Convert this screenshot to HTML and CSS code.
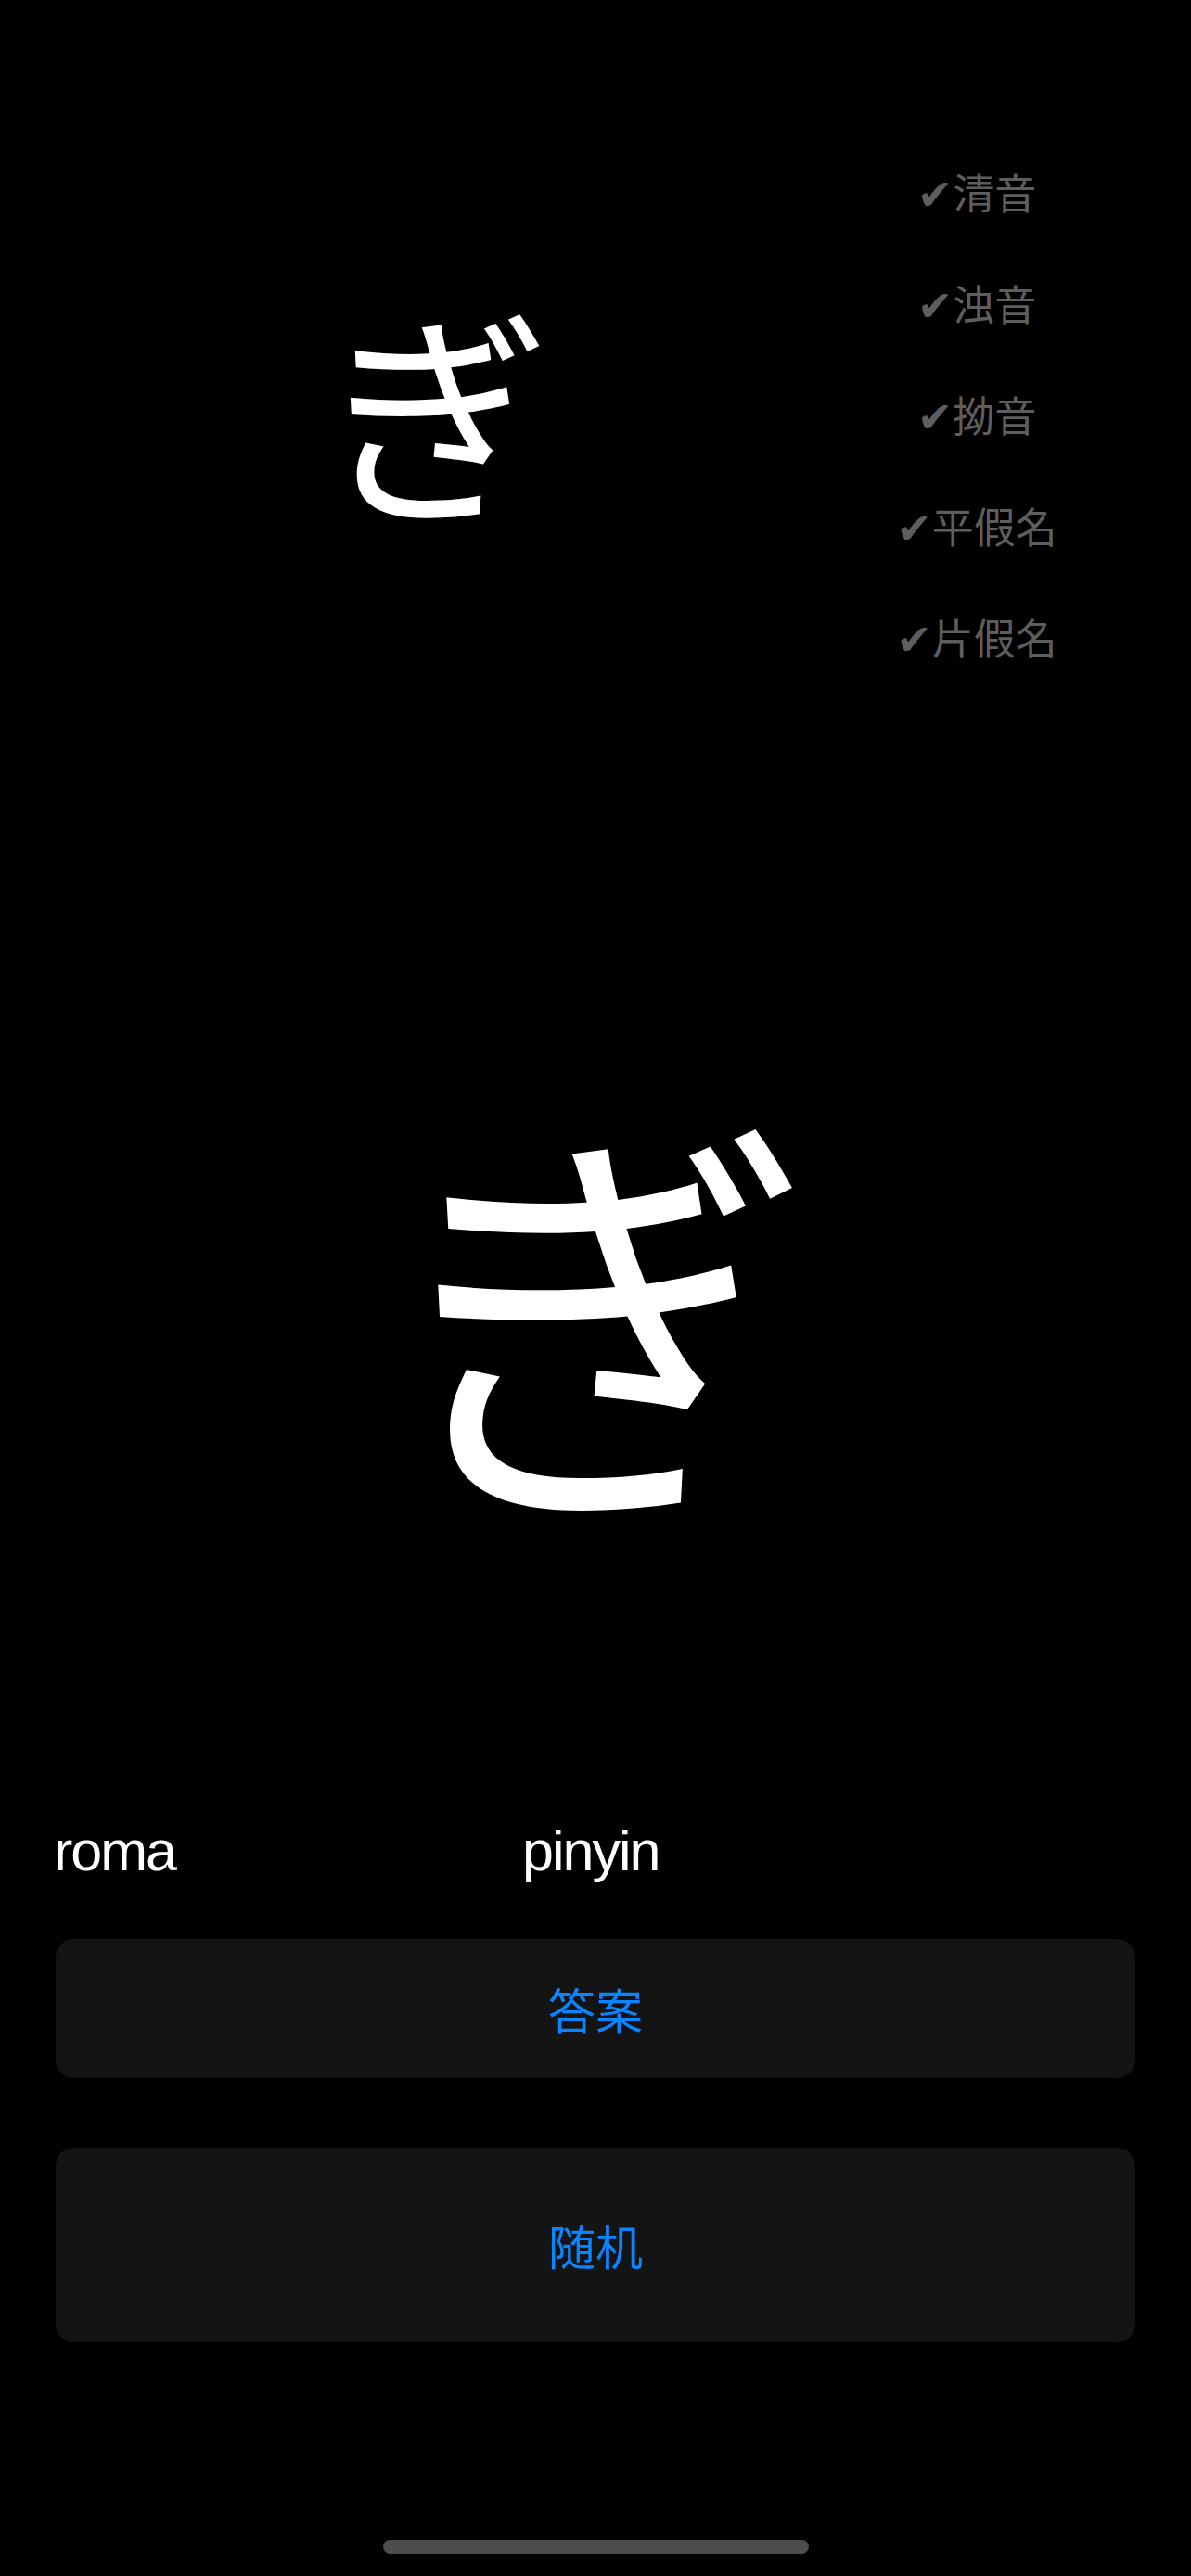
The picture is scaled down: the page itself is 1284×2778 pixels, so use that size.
FILE: index.html
```html
<!DOCTYPE html>
<html lang="ja">
<head>
<meta charset="utf-8">
<title>Kana</title>
<link rel="stylesheet" href="styles.css">
</head>
<body>
<div class="screen">
  <div class="top-row">
    <div class="small-col"><span class="small-kana">ぎ</span></div>
    <ul class="menu">
      <li class="menu-item"><span class="check">✔</span>清音</li>
      <li class="menu-item"><span class="check">✔</span>浊音</li>
      <li class="menu-item"><span class="check">✔</span>拗音</li>
      <li class="menu-item"><span class="check">✔</span>平假名</li>
      <li class="menu-item"><span class="check">✔</span>片假名</li>
    </ul>
  </div>
  <div class="big-area"><span class="big-kana">ぎ</span></div>
  <div class="answer-row">
    <span class="roma">roma</span>
    <span class="pinyin">pinyin</span>
  </div>
  <div class="btn btn-answer">答案</div>
  <div class="btn btn-random">随机</div>
  <div class="home-bar"></div>
</div>
</body>
</html>
```

FILE: styles.css
```css
html, body {
  margin: 0;
  padding: 0;
  background: #000;
}
.screen {
  width: 1284px;
  height: 2778px;
  display: flex;
  flex-direction: column;
  background: #000;
  font-family: "Noto Sans CJK SC", "Noto Sans CJK JP", sans-serif;
  color: #fff;
  overflow: hidden;
}
.top-row {
  margin-top: 147px;
  height: 600px;
  display: flex;
  align-items: center;
}
.small-col {
  width: 956px;
  display: flex;
  justify-content: center;
  padding-right: 14px;
  box-sizing: border-box;
}
.small-kana {
  font-family: "Noto Sans CJK JP", sans-serif;
  font-size: 245px;
  line-height: 245px;
  margin-top: -16px;
}
.menu {
  list-style: none;
  margin: 0;
  padding: 0;
  width: 194px;
  display: flex;
  flex-direction: column;
  align-items: center;
}
.menu-item {
  height: 120px;
  line-height: 120px;
  font-size: 45px;
  color: #5e5e5e;
  white-space: nowrap;
}
.check {
  font-family: "DejaVu Sans", sans-serif;
  font-size: 46px;
  margin-right: 0;
}
.big-area {
  height: 1201px;
  box-sizing: border-box;
  padding-top: 427px;
  display: flex;
  justify-content: center;
  align-items: flex-start;
}
.big-kana {
  font-family: "Noto Sans CJK JP", sans-serif;
  font-size: 460px;
  line-height: 460px;
  margin-left: 10px;
}
.answer-row {
  height: 96px;
  display: flex;
  align-items: center;
  padding-left: 58px;
  font-family: "Liberation Sans", Arial, sans-serif;
  font-size: 61px;
  letter-spacing: -2px;
  line-height: 96px;
}
.roma {
  width: 505px;
}
.btn {
  margin: 0 60px;
  background: #141414;
  border-radius: 20px;
  display: flex;
  align-items: center;
  justify-content: center;
  color: #0a84ff;
  font-size: 51px;
}
.btn-answer {
  margin-top: 47px;
  height: 150px;
}
.btn-random {
  margin-top: 75px;
  height: 210px;
}
.home-bar {
  margin: 213px auto 0;
  width: 459px;
  height: 15px;
  border-radius: 8px;
  background: #4d4d4d;
}
```
